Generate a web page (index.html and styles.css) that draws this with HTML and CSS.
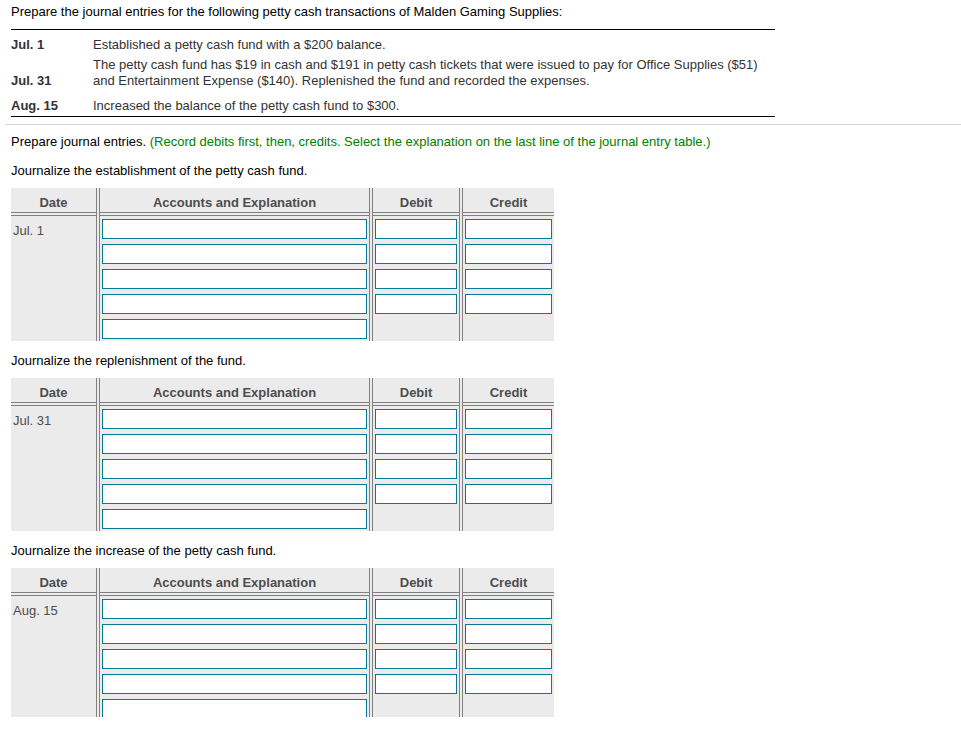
FILE: index.html
```html
<!DOCTYPE html>
<html lang="en">
<head>
<meta charset="utf-8">
<title>Petty cash journal entries</title>
<link rel="stylesheet" href="styles.css">
</head>
<body>
<div class="page">
  <p class="title">Prepare the journal entries for the following petty cash transactions of Malden Gaming Supplies:</p>
  <div class="txns">
    <div class="txn txn-1">
      <div class="txn-date">Jul. 1</div>
      <div class="txn-desc">Established a petty cash fund with a $200 balance.</div>
    </div>
    <div class="txn txn-2">
      <div class="txn-date">Jul. 31</div>
      <div class="txn-desc">The petty cash fund has $19 in cash and $191 in petty cash tickets that were issued to pay for Office Supplies ($51) and Entertainment Expense ($140). Replenished the fund and recorded the expenses.</div>
    </div>
    <div class="txn txn-3">
      <div class="txn-date">Aug. 15</div>
      <div class="txn-desc">Increased the balance of the petty cash fund to $300.</div>
    </div>
  </div>
  <div class="rule"></div>
  <p class="instr">Prepare journal entries. <span class="hint">(Record debits first, then, credits. Select the explanation on the last line of the journal entry table.)</span></p>

  <p class="prompt">Journalize the establishment of the petty cash fund.</p>
  <div class="jt">
    <div class="col c-date"><div class="th">Date</div><div class="td"><span class="dt">Jul. 1</span></div></div>
    <div class="col c-acct"><div class="th">Accounts and Explanation</div><div class="td inputs"><input class="box"><input class="box"><input class="box"><input class="box"><input class="box"></div></div>
    <div class="col c-debit"><div class="th">Debit</div><div class="td inputs"><input class="box"><input class="box"><input class="box"><input class="box"></div></div>
    <div class="col c-credit"><div class="th">Credit</div><div class="td inputs"><input class="box"><input class="box"><input class="box"><input class="box"></div></div>
  </div>

  <p class="prompt">Journalize the replenishment of the fund.</p>
  <div class="jt">
    <div class="col c-date"><div class="th">Date</div><div class="td"><span class="dt">Jul. 31</span></div></div>
    <div class="col c-acct"><div class="th">Accounts and Explanation</div><div class="td inputs"><input class="box"><input class="box"><input class="box"><input class="box"><input class="box"></div></div>
    <div class="col c-debit"><div class="th">Debit</div><div class="td inputs"><input class="box"><input class="box"><input class="box"><input class="box"></div></div>
    <div class="col c-credit"><div class="th">Credit</div><div class="td inputs"><input class="box"><input class="box"><input class="box"><input class="box"></div></div>
  </div>

  <p class="prompt">Journalize the increase of the petty cash fund.</p>
  <div class="jt">
    <div class="col c-date"><div class="th">Date</div><div class="td"><span class="dt">Aug. 15</span></div></div>
    <div class="col c-acct"><div class="th">Accounts and Explanation</div><div class="td inputs"><input class="box"><input class="box"><input class="box"><input class="box"><input class="box"></div></div>
    <div class="col c-debit"><div class="th">Debit</div><div class="td inputs"><input class="box"><input class="box"><input class="box"><input class="box"></div></div>
    <div class="col c-credit"><div class="th">Credit</div><div class="td inputs"><input class="box"><input class="box"><input class="box"><input class="box"></div></div>
  </div>
</div>
</body>
</html>
```

FILE: styles.css
```css
html, body {
  margin: 0;
  padding: 0;
  background: #fff;
}
body {
  font-family: "Liberation Sans", Arial, sans-serif;
  font-size: 13px;
  line-height: 16px;
  color: #000;
}
.page {
  height: 717px;
  overflow: hidden;
}
p { margin: 0; }
.title {
  margin: 4px 0 0 11px;
  color: #000;
}
.txns {
  margin: 9px 0 0 11px;
  width: 764px;
  border-top: 1px solid #000;
  border-bottom: 1px solid #000;
  padding: 7px 0 2px;
  color: #333;
}
.txn {
  display: flex;
  align-items: flex-end;
}
.txn-2 { margin-top: 4px; }
.txn-3 { margin-top: 9px; }
.txn-date {
  width: 82px;
  flex: none;
  font-weight: bold;
}
.txn-desc {
  flex: 1;
}
.rule {
  margin: 7px 0 0 5px;
  border-top: 1px solid #d3d6de;
}
.instr {
  margin: 9px 0 0 11px;
  color: #000;
}
.hint { color: #008000; }
.prompt {
  margin: 13px 0 9px 11px;
  color: #000;
}
.jt + .prompt { margin-top: 12px; }
.jt {
  margin-left: 11px;
  width: 543px;
  display: flex;
  gap: 2px;
  background: #ebebeb;
}
.col {
  box-sizing: border-box;
  display: flex;
  flex-direction: column;
}
.c-date { width: 86px; border-right: 1px solid #808080; }
.c-acct { width: 271px; border-left: 1px solid #808080; border-right: 1px solid #808080; }
.c-debit { width: 88px; border-left: 1px solid #808080; border-right: 1px solid #808080; }
.c-credit { width: 92px; border-left: 1px solid #808080; }
.th {
  height: 25px;
  box-sizing: border-box;
  padding-top: 7px;
  text-align: center;
  font-weight: bold;
  color: #4d4d4d;
  border-bottom: 1px solid #808080;
  margin-bottom: 2px;
}
.td {
  flex: 1;
  border-top: 1px solid #808080;
}
.dt {
  display: block;
  padding: 7px 2px 0;
  color: #4d4d4d;
}
.inputs {
  display: flex;
  flex-direction: column;
  gap: 5px;
  padding: 3px 2px 2px;
}
.box {
  display: block;
  box-sizing: border-box;
  width: 100%;
  height: 20px;
  margin: 0;
  padding: 0 3px;
  border: 1px solid #087a98;
  border-radius: 0;
  background: #fff;
  font: inherit;
  outline: none;
}
```
